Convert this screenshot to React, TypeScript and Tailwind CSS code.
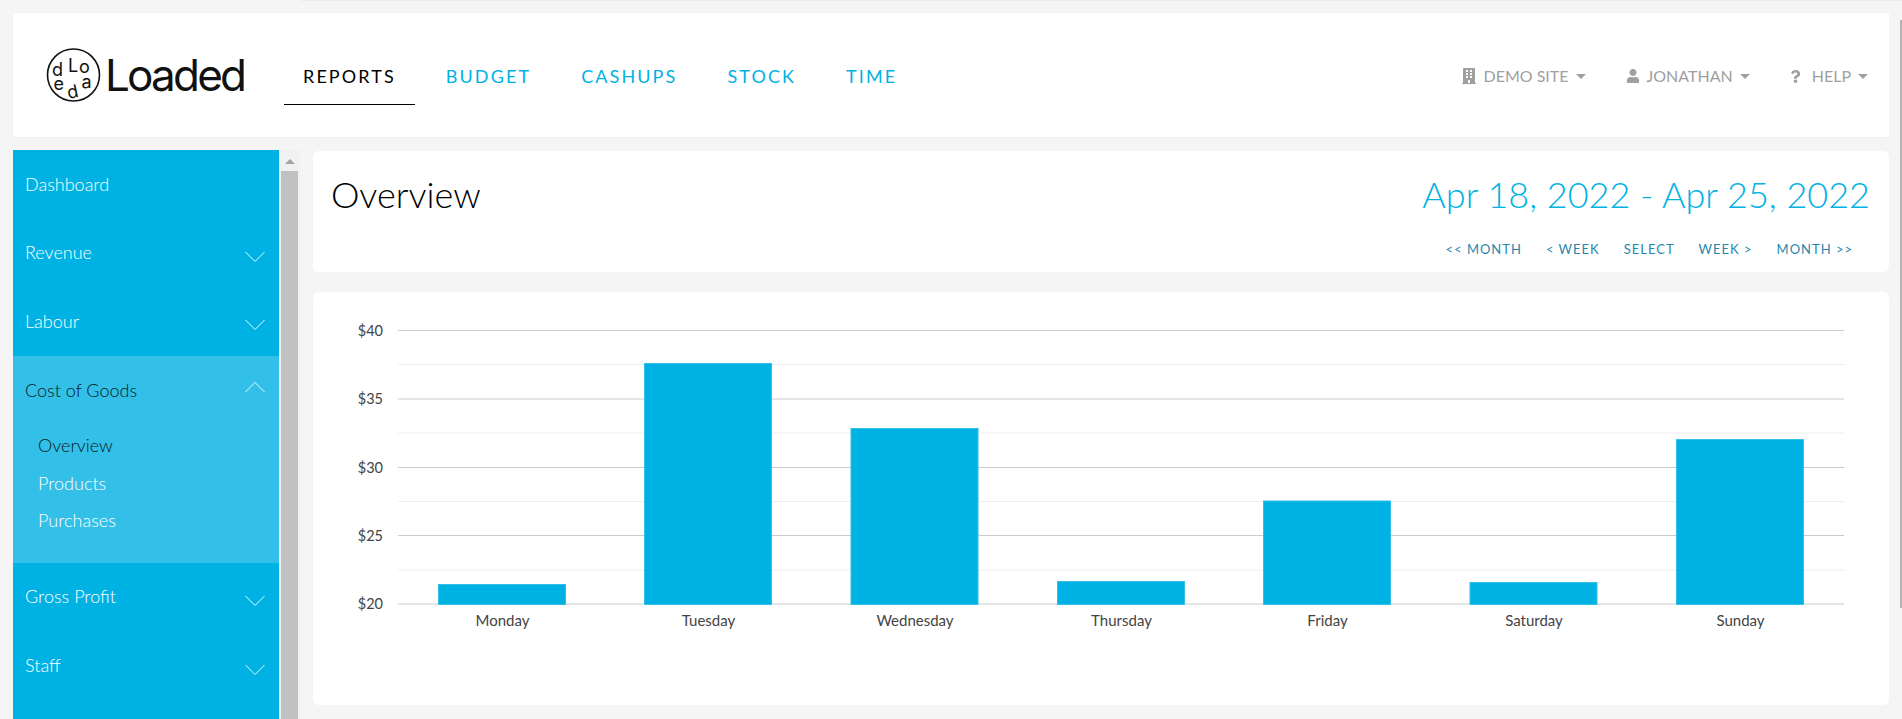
import React from "react";
import { FaBuilding, FaUser, FaQuestion } from "react-icons/fa";

const NAV = ["REPORTS", "BUDGET", "CASHUPS", "STOCK", "TIME"];
const RANGE_LINKS = ["<< MONTH", "< WEEK", "SELECT", "WEEK >", "MONTH >>"];

// chart data, in page coordinates (the svg viewBox starts at the card's corner)
const MAJOR = [
  { label: "$40", y: 330.5 },
  { label: "$35", y: 399 },
  { label: "$30", y: 467.5 },
  { label: "$25", y: 535.5 },
  { label: "$20", y: 604 },
];
const MINOR = [364.5, 433, 501.5, 570];
const BARS = [
  { day: "Monday", x: 437.5, top: 584.5 },
  { day: "Tuesday", x: 643.5, top: 363.5 },
  { day: "Wednesday", x: 850, top: 428.5 },
  { day: "Thursday", x: 1056.5, top: 581.5 },
  { day: "Friday", x: 1262.5, top: 501 },
  { day: "Saturday", x: 1469, top: 582.5 },
  { day: "Sunday", x: 1675.5, top: 439.5 },
];

const Caret = () => (
  <span className="ml-[7px] inline-block h-0 w-0 border-x-[5px] border-t-[5px] border-x-transparent border-t-[#a0a0a0]" />
);

const Chevron = ({ up }: { up?: boolean }) => (
  <svg width="20" height="12" viewBox="0 0 20 12" fill="none" stroke="#e8f8fd" strokeWidth="1" className="mr-[14px]">
    <path d={up ? "M0.5 11L10 1.5L19.5 11" : "M0.5 1L10 10.5L19.5 1"} />
  </svg>
);

const SideItem = ({ label, chevron, short }: { label: string; chevron?: boolean; short?: boolean }) => (
  <div className={short ? "flex h-[68px] items-center justify-between pb-[2px] pl-3 text-[18px] font-light text-white" : chevron ? "flex h-[69px] items-center justify-between pb-[2px] pl-3 text-[18px] font-light text-white" : "flex h-[69px] items-center justify-between pl-3 text-[18px] font-light text-white"}>
    <span>{label}</span>
    {chevron && <span className="pt-[8px]"><Chevron /></span>}
  </div>
);

const Logo = () => (
  <svg width="60" height="60" viewBox="0 0 60 60" className="mr-[1px] shrink-0">
    <circle cx="29.5" cy="30" r="26" fill="none" stroke="#111" strokeWidth="1.6" />
    <g fontFamily="Inter, sans-serif" fontSize="18" fill="#111">
      <text x="8" y="31">d</text>
      <text x="24" y="27">L</text>
      <text x="35" y="28">o</text>
      <text x="37.5" y="42.5">a</text>
      <text x="23" y="53" transform="rotate(-12 29 47)">d</text>
      <text x="9.5" y="45">e</text>
    </g>
  </svg>
);

export default function App() {
  return (
    <div className="relative h-[719px] w-full overflow-hidden bg-[#f5f5f5] font-['Lato',sans-serif]">
      {/* sliver of whatever sits above the frame */}
      <div className="ml-[300px] h-px bg-[#e6edf5]" />

      <header className="mx-[13px] mt-3 flex h-[125px] items-center border-b border-[#eeeeee] bg-white pl-[31px]">
        <div className="flex w-[240px] items-center">
          <Logo />
          <span className="font-['Inter',sans-serif] text-[44px] leading-none tracking-[-2.8px] text-[#111]">Loaded</span>
        </div>
        <nav className="flex gap-3">
          {NAV.map((item, i) => (
            <a
              key={item}
              className={
                i === 0
                  ? "border-b border-black px-[19px] pb-[16px] pt-[19px] text-[18px] leading-[24px] tracking-[2.1px] text-black"
                  : "px-[19px] pb-[17px] pt-[19px] text-[18px] leading-[24px] tracking-[2.1px] text-[#00b2e3]"
              }
            >
              {item}
            </a>
          ))}
        </nav>
        <div className="ml-auto flex items-center pr-[21px] pt-[2px] text-[16px] text-[#a0a0a0]">
          <FaBuilding className="mr-[7px] text-[16px]" />
          <span>DEMO SITE</span>
          <Caret />
          <FaUser className="ml-[40px] mr-[7px] text-[14px]" />
          <span>JONATHAN</span>
          <Caret />
          <FaQuestion className="ml-[39px] mr-[10px] text-[13px]" />
          <span>HELP</span>
          <Caret />
        </div>
      </header>

      <div className="mx-[13px] mt-3 flex gap-[13px]">
        <div className="flex h-[569px] w-[287px] shrink-0">
          <aside className="w-[266px] bg-[#00b2e3]">
            <SideItem label="Dashboard" />
            <SideItem label="Revenue" chevron />
            <SideItem label="Labour" chevron short />
            <div className="h-[207px] bg-[#33c0e8] text-[18px] font-light">
              <div className="flex h-[69px] items-center justify-between pl-3 text-[#0b1a20]">
                <span>Cost of Goods</span>
                <span className="pb-[8px]"><Chevron up /></span>
              </div>
              <div className="flex flex-col pl-[25px] pt-[2px] leading-[37.5px] text-white">
                <span className="text-[#0b1a20]">Overview</span>
                <span>Products</span>
                <span>Purchases</span>
              </div>
            </div>
            <SideItem label="Gross Profit" chevron />
            <SideItem label="Staff" chevron />
          </aside>
          <div className="flex w-[21px] flex-col items-center bg-[#f1f1f1]">
            <span className="mt-[9px] h-0 w-0 border-x-[5px] border-b-[5px] border-x-transparent border-b-[#a3a3a3]" />
            <span className="mt-[7px] h-full w-[17px] bg-[#c1c1c1]" />
          </div>
        </div>

        <main className="mt-px min-w-0 flex-1">
          <section className="flex h-[121px] flex-col rounded-md bg-white pl-[18px] pr-[19px] pt-[21px]">
            <div className="flex items-baseline justify-between text-[36px] leading-[44px]">
              <h1 className="font-light text-black">Overview</h1>
              <span className="font-light text-[#00b2e3]">Apr 18, 2022 - Apr 25, 2022</span>
            </div>
            <div className="mt-[23px] flex justify-end gap-6 pr-[17px] text-[13px] leading-[20px] tracking-[1px] text-[#2a87ab]">
              {RANGE_LINKS.map(link => (
                <a key={link}>{link}</a>
              ))}
            </div>
          </section>

          <section className="mt-5 h-[413px] rounded-md bg-white">
            <svg viewBox="313 292 1574 413" className="block h-[413px] w-full font-['Lato',sans-serif]">
              {MINOR.map(y => (
                <line key={y} x1="397" x2="1843" y1={y} y2={y} stroke="#eeeeee" />
              ))}
              {MAJOR.map(tick => (
                <g key={tick.label}>
                  <line x1="397" x2="1843" y1={tick.y} y2={tick.y} stroke="#cccccc" />
                  <text x="382" y={tick.y + 5} textAnchor="end" fontSize="14.5" fill="#444444">
                    {tick.label}
                  </text>
                </g>
              ))}
              {BARS.map(bar => (
                <g key={bar.day}>
                  <rect x={bar.x} y={bar.top} width="127" height={604.5 - bar.top} fill="#00b2e3" stroke="#33c0e8" strokeWidth="1" />
                  <text x={bar.x + 64} y="626" textAnchor="middle" fontSize="15" fill="#444444">
                    {bar.day}
                  </text>
                </g>
              ))}
            </svg>
          </section>
        </main>
      </div>

      {/* the browser's own scrollbar, clipped at the window edge */}
      <div className="absolute right-0 top-[20px] h-[588px] w-[2px] bg-[#b5b5b5]" />
    </div>
  );
}
